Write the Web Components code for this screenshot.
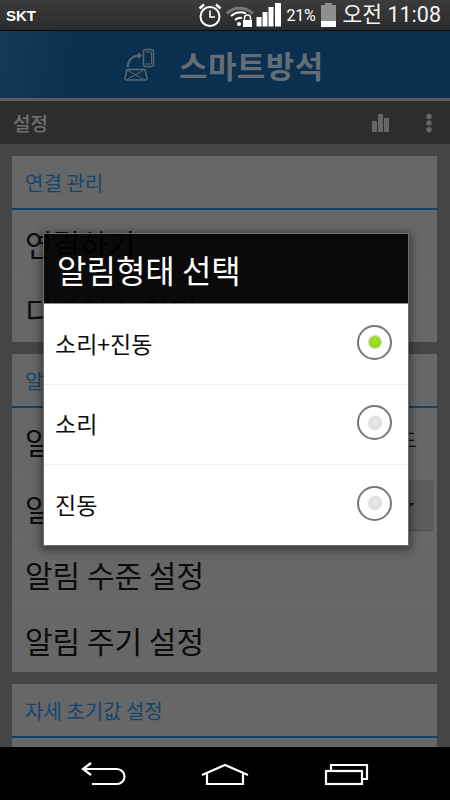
<!DOCTYPE html>
<html>
<head>
<meta charset="utf-8">
<style>
  html, body { margin: 0; padding: 0; background: #444645; }
  body { width: 450px; height: 800px; overflow: hidden; font-family: "Noto Sans CJK KR", "Roboto", sans-serif; }
  app-screen { height: 800px; }
</style>
</head>
<body>
<app-screen>
  <status-bar slot="top"></status-bar>
  <app-header slot="top" title="스마트방석"></app-header>
  <action-bar slot="top" title="설정"></action-bar>

  <settings-card title="연결 관리">
    <settings-row>연결하기</settings-row>
    <settings-row>디바이스 찾기</settings-row>
  </settings-card>
  <settings-card title="알림 설정">
    <settings-row>알림 형태<span slot="end" class="value">소리+진동 모드</span></settings-row>
    <settings-row>알림 설정<toggle-button slot="end"></toggle-button></settings-row>
    <settings-row>알림 수준 설정</settings-row>
    <settings-row>알림 주기 설정</settings-row>
  </settings-card>
  <settings-card title="자세 초기값 설정">
    <settings-row>자세 초기화</settings-row>
  </settings-card>

  <nav-bar slot="bottom"></nav-bar>
  <choice-dialog slot="overlay" title="알림형태 선택">
    <choice-row checked>소리+진동</choice-row>
    <choice-row>소리</choice-row>
    <choice-row last>진동</choice-row>
  </choice-dialog>
</app-screen>

<script>
class AppScreen extends HTMLElement {
  constructor() {
    super();
    this.shadowDOM = this.attachShadow({ mode: 'open' });
    this.shadowDOM.innerHTML = `
      <style>
        :host { display: flex; flex-direction: column; position: relative; width: 450px; overflow: hidden; background: #444645; }
        .content { flex: 1; min-height: 0; overflow: hidden; display: flex; flex-direction: column; gap: 12px; padding: 12px 13px 0 12px; }
        .scrim { position: absolute; inset: 0; display: flex; justify-content: center; pointer-events: none; }
      </style>
      <slot name="top"></slot>
      <div class="content"><slot></slot></div>
      <slot name="bottom"></slot>
      <div class="scrim"><slot name="overlay"></slot></div>`;
  }
}
customElements.define('app-screen', AppScreen);

class StatusBar extends HTMLElement {
  constructor() {
    super();
    this.shadowDOM = this.attachShadow({ mode: 'open' });
    this.shadowDOM.innerHTML = `
      <style>
        :host { display: flex; align-items: center; height: 30px; padding: 0 9px 0 6px; box-sizing: content-box; flex: none;
          background: linear-gradient(#3c3c3c, #2b2b2b); border-bottom: 1px solid #0c0c0c; color: #fff; }
        .carrier { font: bold 15px "Liberation Sans", sans-serif; flex: 1; }
        .icons { display: flex; align-items: center; }
        svg { display: block; }
        .pct { font: 16px "Roboto", sans-serif; margin: 0 4px 0 4px; letter-spacing: -.2px; }
        .time { font: 21.500px "Roboto", "Noto Sans CJK KR", sans-serif; line-height: 30px; margin-left: 6px; color: #f4f4f4; white-space: nowrap; }
      </style>
      <span class="carrier">SKT</span>
      <div class="icons">
        <svg width="26" height="28" viewBox="0 0 26 28" fill="none" stroke="#fff">
          <circle cx="13" cy="15.500" r="9.500" stroke-width="2"/>
          <path d="M13 9.500v6.500h5" stroke-width="1.600"/>
          <path d="M2.500 7.500 7 3.500M23.500 7.500 19 3.500" stroke-width="2.400"/>
        </svg>
        <svg width="28" height="28" viewBox="0 0 28 28" style="margin-left:3px">
          <path d="M1 12.500C8 5.500 19 5.500 27 12.500" fill="none" stroke="#777" stroke-width="3"/>
          <path d="M5 15C10 11 15 10.500 20 12.500" fill="none" stroke="#fff" stroke-width="2"/>
          <path d="M9 19C11.500 17 14 16.500 16 17" fill="none" stroke="#fff" stroke-width="2"/>
          <circle cx="13" cy="23" r="2" fill="#fff"/>
          <path d="M18.500 19v-2a3 3 0 0 1 6 0v2" fill="none" stroke="#fff" stroke-width="1.500"/>
          <rect x="17" y="19" width="9" height="7" fill="#fff"/>
        </svg>
        <svg width="26" height="24" viewBox="0 0 26 24" fill="#fff" style="margin-left:2px">
          <rect x="0.500" y="14" width="5" height="9.500"/>
          <rect x="6.500" y="9" width="5" height="14.500"/>
          <rect x="12.500" y="4" width="5" height="19.500"/>
          <rect x="19" y="0" width="6" height="23.500"/>
        </svg>
        <span class="pct">21%</span>
        <svg width="17" height="24" viewBox="0 0 17 24">
          <rect x="5" y="0" width="7" height="3" fill="#8e8e8e"/>
          <rect x="1" y="2" width="15" height="16" fill="#8e8e8e"/>
          <rect x="1" y="18" width="15" height="6" fill="#fff"/>
        </svg>
        <span class="time">오전 11:08</span>
      </div>`;
  }
}
customElements.define('status-bar', StatusBar);

class AppHeader extends HTMLElement {
  constructor() {
    super();
    this.shadowDOM = this.attachShadow({ mode: 'open' });
    this.shadowDOM.innerHTML = `
      <style>
        :host { display: flex; align-items: center; gap: 21px; height: 70px; flex: none; box-sizing: border-box; padding-left: 124px;
          background: linear-gradient(100deg, #16395a 0, #0b2f4e 18%, #0b2f4e 100%); border-bottom: 3px solid #5d5d5d; color: #646d75; }
        .title { font: bold 31px "Noto Sans CJK KR", sans-serif; line-height: 40px; letter-spacing: .4px; }
        svg { display: block; }
      </style>
      <svg width="34" height="34" viewBox="0 0 34 34" fill="none" stroke="#586877" stroke-width="1.500">
        <rect x="19.500" y="1.500" width="10" height="17" rx="2"/>
        <path d="M21.500 4h6v12h-6" stroke-width="1"/>
        <path d="M3.500 19C4 12 9 8 14 7.500" stroke-width="2"/>
        <path d="M14 4l4 3.500-4 3.500z" fill="#586877" stroke="none"/>
        <path d="M3 21.500H21L23 30Q23 32 21 32H3Q1 32 1 30Z"/>
        <path d="M4 22.500l15 8.500M19 22.500L4 31" stroke-width="1"/>
      </svg>
      <span class="title">${this.getAttribute('title')}</span>`;
  }
}
customElements.define('app-header', AppHeader);

class ActionBar extends HTMLElement {
  constructor() {
    super();
    this.shadowDOM = this.attachShadow({ mode: 'open' });
    this.shadowDOM.innerHTML = `
      <style>
        :host { display: flex; align-items: center; height: 43px; flex: none; padding: 0 18px 0 13px; background: #2d2d2d; color: #707070; }
        .title { font: 500 19px "Noto Sans CJK KR", sans-serif; flex: 1; }
        svg { display: block; }
      </style>
      <span class="title">${this.getAttribute('title')}</span>
      <svg width="18" height="20" viewBox="0 0 18 20" fill="#666" style="margin-right:37px">
        <rect x="1" y="8" width="5" height="11"/><rect x="7" y="1" width="5" height="18"/><rect x="13" y="5" width="5" height="14"/>
      </svg>
      <svg width="6" height="20" viewBox="0 0 6 20" fill="#666">
        <circle cx="3" cy="3.500" r="2.700"/><circle cx="3" cy="10" r="2.700"/><circle cx="3" cy="16.700" r="2.700"/>
      </svg>`;
  }
}
customElements.define('action-bar', ActionBar);

class SettingsCard extends HTMLElement {
  constructor() {
    super();
    this.shadowDOM = this.attachShadow({ mode: 'open' });
    this.shadowDOM.innerHTML = `
      <style>
        :host { display: block; background: #676767; flex: none; }
        .head { height: 54px; box-sizing: border-box; padding: 0 13px; display: flex; align-items: center;
          font: 20px "Noto Sans CJK KR", sans-serif; color: #14466c; border-bottom: 2px solid #0e4268; }
      </style>
      <div class="head">${this.getAttribute('title')}</div>
      <slot></slot>`;
  }
}
customElements.define('settings-card', SettingsCard);

class SettingsRow extends HTMLElement {
  constructor() {
    super();
    this.shadowDOM = this.attachShadow({ mode: 'open' });
    this.shadowDOM.innerHTML = `
      <style>
        :host { display: flex; align-items: center; justify-content: space-between; height: 66px; box-sizing: border-box; padding: 0 4px 0 13px;
          font: 30px "Noto Sans CJK KR", sans-serif; color: #0c0c0c; border-top: 1px solid #5e6a75; white-space: nowrap; }
        :host(:first-of-type) { border-top: 0; }
        ::slotted(.value) { font-size: 20px; padding: 0 16px 4px 0; }
      </style>
      <span><slot></slot></span>
      <slot name="end"></slot>`;
  }
}
customElements.define('settings-row', SettingsRow);

class ToggleButton extends HTMLElement {
  constructor() {
    super();
    this.shadowDOM = this.attachShadow({ mode: 'open' });
    this.shadowDOM.innerHTML = `
      <style>
        :host { display: block; width: 60px; height: 50px; margin-bottom: 6px; border-radius: 3px; background: #5c5c5c; box-shadow: 0 1px 1px rgba(0,0,0,.3); position: relative; }
        .arrow { position: absolute; left: 37px; top: 23px; width: 5px; height: 5px; background: #1a1a1a; clip-path: polygon(0 0, 100% 0, 0 100%); }
      </style>
      <div class="arrow"></div>`;
  }
}
customElements.define('toggle-button', ToggleButton);

class NavBar extends HTMLElement {
  constructor() {
    super();
    this.shadowDOM = this.attachShadow({ mode: 'open' });
    this.shadowDOM.innerHTML = `
      <style>
        :host { display: flex; align-items: center; justify-content: center; gap: 74px; height: 53px; flex: none; background: #000; }
        svg { display: block; }
      </style>
      <svg width="46" height="26" viewBox="0 0 46 26" fill="none" stroke="#fff" stroke-width="2.200">
        <path d="M11 2 3 8l8 6"/><path d="M3 8H37a7.500 7.500 0 0 1 0 15H12"/>
      </svg>
      <svg width="50" height="26" viewBox="0 0 50 26" fill="none" stroke="#fff" stroke-width="2.200">
        <path d="M2 14 25 4 48 14"/><path d="M7 12V23H43V12"/>
      </svg>
      <svg width="46" height="26" viewBox="0 0 46 26" fill="none" stroke="#fff" stroke-width="2.200">
        <rect x="2" y="10" width="36" height="13"/><path d="M7 10V4H43V18H38"/>
      </svg>`;
  }
}
customElements.define('nav-bar', NavBar);

class ChoiceDialog extends HTMLElement {
  constructor() {
    super();
    this.shadowDOM = this.attachShadow({ mode: 'open' });
    this.shadowDOM.innerHTML = `
      <style>
        :host { display: block; width: 366px; height: fit-content; margin: 233px 0 0 2px; box-sizing: border-box;
          border: 1px solid #6e6e6e; box-shadow: 0 2px 8px 2px rgba(0,0,0,.45); }
        .title { height: 69px; box-sizing: content-box; background: rgba(0,0,0,.9); color: #fff; padding: 0 13px; display: flex; align-items: center;
          font: 32px "Noto Sans CJK KR", sans-serif; border-bottom: 1px solid #8a8a8a; }
        .list { background: #fff; }
      </style>
      <div class="title">${this.getAttribute('title')}</div>
      <div class="list"><slot></slot></div>`;
  }
}
customElements.define('choice-dialog', ChoiceDialog);

class ChoiceRow extends HTMLElement {
  constructor() {
    super();
    this.shadowDOM = this.attachShadow({ mode: 'open' });
    const dot = this.hasAttribute('checked')
      ? 'background: radial-gradient(circle at 50% 40%, #a6e52c, #86cf12); box-shadow: 0 0 1px 1px #cfcfcf;'
      : 'background: radial-gradient(circle at 50% 45%, #ececec, #d6d6d6); box-shadow: 0 0 1px 1px #d8d8d8;';
    const h = this.hasAttribute('last') ? 81 : 80;
    this.shadowDOM.innerHTML = `
      <style>
        :host { display: flex; align-items: center; justify-content: space-between; height: ${h}px; box-sizing: border-box; padding: 0 16px 0 11px;
          font: 23px "Noto Sans CJK KR", sans-serif; color: #0c0c0c; border-top: 1px solid #f1f1f1; }
        :host(:first-of-type) { border-top: 0; }
        .label { padding-bottom: 3px; }
        .radio { width: 31px; height: 31px; margin-bottom: 4px; border: 2px solid #767676; border-radius: 50%; background: #fff; display: grid; place-items: center; }
        .dot { width: 12px; height: 12px; border-radius: 50%; ${dot} }
      </style>
      <span class="label"><slot></slot></span>
      <div class="radio"><div class="dot"></div></div>`;
  }
}
customElements.define('choice-row', ChoiceRow);
</script>
</body>
</html>
